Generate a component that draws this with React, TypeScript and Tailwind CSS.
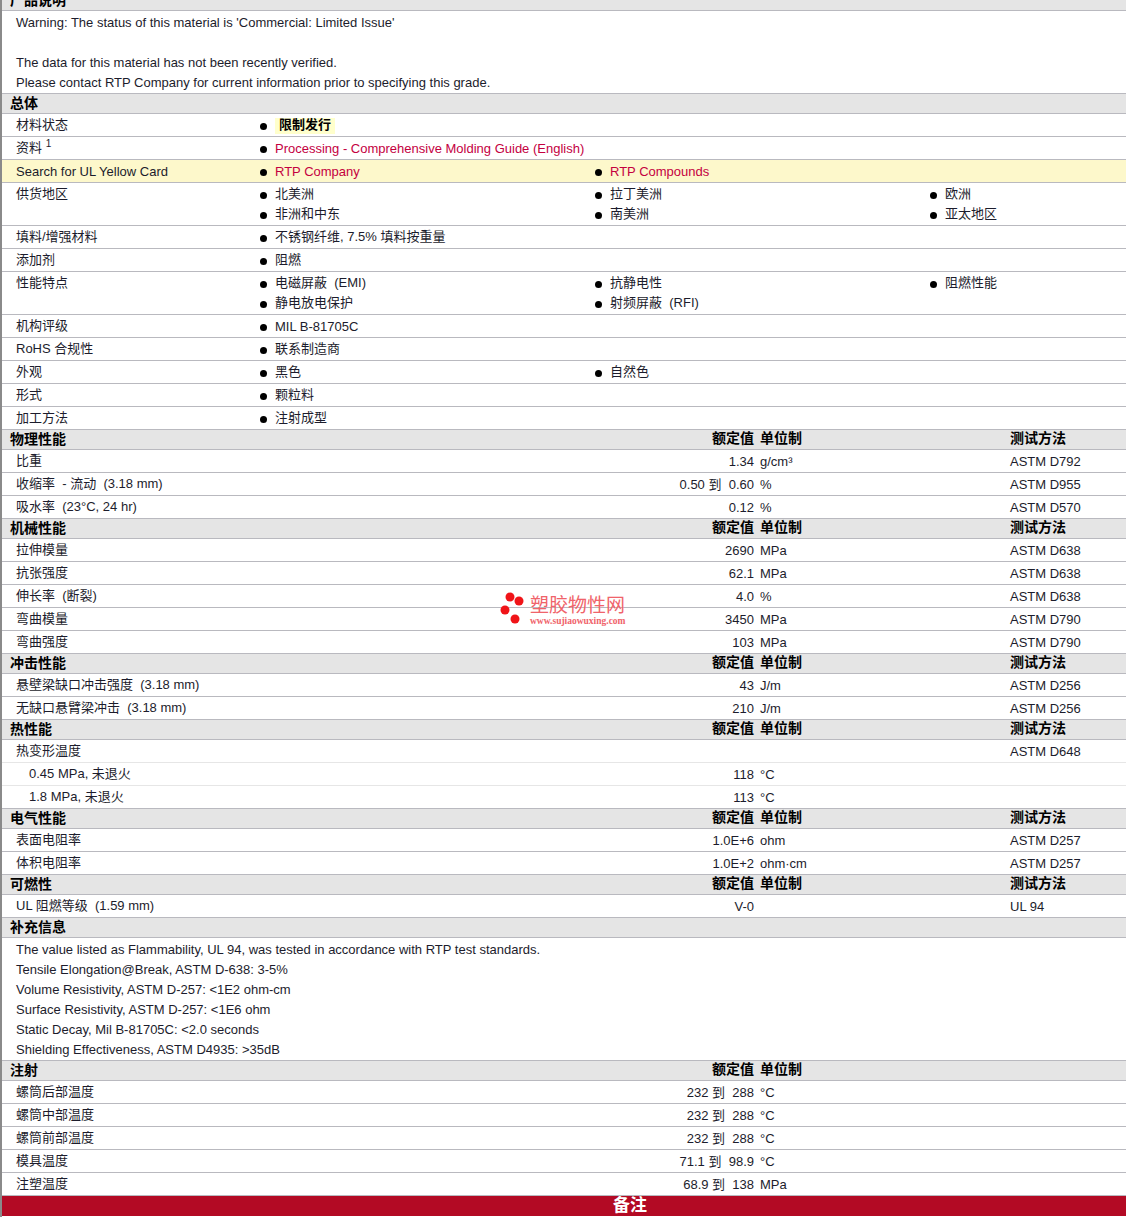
const FONT = "font-['Liberation_Sans','Noto_Sans_CJK_SC',sans-serif]"

type Item = { text: string; link?: boolean }

// Noto CJK glyphs sit a pixel lower than the Latin ones here
const nudge = (text: string) => (/[\u4e00-\u9fff]/.test(text) ? 'mt-[-2px]' : '')

function Section({ title, cols, method, className = '' }: { title: string; cols?: boolean; method?: boolean; className?: string }) {
  return (
    <div className={`flex h-[20px] items-center border-b border-[#b9b9bf] bg-[#e5e5e5] pb-[2px] pl-[8px] text-[14px] font-bold leading-[17px] text-black ${className}`}>
      <div className="mt-[2px] flex-1">{title}</div>
      {cols && <div className="w-[100px] pr-[1px] text-right">额定值</div>}
      {cols && <div className="ml-[5px] w-[250px]">单位制</div>}
      <div className="w-[116px]">{method ? '测试方法' : ''}</div>
    </div>
  )
}

function Bullet({ item }: { item: Item }) {
  return (
    <div className="flex h-[20px] items-center whitespace-pre">
      <span className="h-[7px] w-[7px] rounded-full bg-black" />
      <span className={`ml-[8px] ${nudge(item.text)} ${item.link ? 'text-[#c4003f]' : ''}`}>{item.text}</span>
    </div>
  )
}

function InfoRow({ label, items, yellow, latin }: { label: React.ReactNode; items: (string | Item)[]; yellow?: boolean; latin?: boolean }) {
  return (
    <div className={`flex border-b border-[#b9b9bf] pt-[2px] pl-[14px] ${yellow ? 'bg-[#fdf8cb]' : ''}`}>
      <div className={`h-[20px] w-[244px] ${latin ? 'leading-[20px]' : 'leading-[18px]'}`}>{label}</div>
      <div className="grid flex-1 grid-cols-[335px_335px_196px]">
        {items.map((it, i) => (
          <Bullet key={i} item={typeof it === 'string' ? { text: it } : it} />
        ))}
      </div>
    </div>
  )
}

function DataRow({ label, value, unit, method, sub, light }: { label: string; value?: string; unit?: string; method?: string; sub?: boolean; light?: boolean }) {
  return (
    <div className={`flex h-[23px] items-center border-b pt-[1px] whitespace-pre ${light ? 'border-[#e6e6e6]' : 'border-[#b9b9bf]'} ${sub ? 'pl-[27px]' : 'pl-[14px]'}`}>
      <div className={`flex-1 ${nudge(label)}`}>{label}</div>
      <div className="pr-[1px] text-right">{value}</div>
      <div className="ml-[5px] w-[250px]">{unit}</div>
      <div className="w-[116px]">{method}</div>
    </div>
  )
}

function TextBlock({ lines, className = '' }: { lines: string[]; className?: string }) {
  return (
    <div className={`border-b border-[#b9b9bf] pl-[14px] leading-[20px] ${className}`}>
      {lines.map((l, i) => (
        <div key={i} className="h-[20px]">{l}</div>
      ))}
    </div>
  )
}

export default function App() {
  return (
    <div className={`relative h-[1217px] w-[1126px] overflow-hidden border-l-2 border-[#8a8a8a] bg-white text-[13px] text-[#1c1c2c] ${FONT}`}>
      <Section title="产品说明" className="mt-[-9px]" />
      <TextBlock
        className="pt-[2px]"
        lines={[
          "Warning: The status of this material is 'Commercial: Limited Issue'",
          '',
          'The data for this material has not been recently verified.',
          'Please contact RTP Company for current information prior to specifying this grade.',
        ]}
      />
      <Section title="总体" />
      <div className="flex border-b border-[#b9b9bf] pt-[2px] pl-[14px]">
        <div className="h-[20px] w-[244px] leading-[18px]">材料状态</div>
        <div className="flex h-[20px] items-center">
          <span className="h-[7px] w-[7px] rounded-full bg-black" />
          <span className="ml-[8px] h-[16px] bg-[#ffffcc] px-[4px] leading-[14px] font-bold text-black">限制发行</span>
        </div>
      </div>
      <InfoRow
        label={<>资料 <sup className="text-[10px]">1</sup></>}
        items={[{ text: 'Processing - Comprehensive Molding Guide (English)', link: true }]}
      />
      <InfoRow latin yellow label="Search for UL Yellow Card" items={[{ text: 'RTP Company', link: true }, { text: 'RTP Compounds', link: true }]} />
      <InfoRow label="供货地区" items={['北美洲', '拉丁美洲', '欧洲', '非洲和中东', '南美洲', '亚太地区']} />
      <InfoRow label="填料/增强材料" items={['不锈钢纤维, 7.5% 填料按重量']} />
      <InfoRow label="添加剂" items={['阻燃']} />
      <InfoRow label="性能特点" items={['电磁屏蔽  (EMI)', '抗静电性', '阻燃性能', '静电放电保护', '射频屏蔽  (RFI)']} />
      <InfoRow label="机构评级" items={['MIL B-81705C']} />
      <InfoRow label="RoHS 合规性" items={['联系制造商']} />
      <InfoRow label="外观" items={['黑色', '自然色']} />
      <InfoRow label="形式" items={['颗粒料']} />
      <InfoRow label="加工方法" items={['注射成型']} />

      <Section title="物理性能" cols method />
      <DataRow label="比重" value="1.34" unit="g/cm³" method="ASTM D792" />
      <DataRow label="收缩率  - 流动  (3.18 mm)" value="0.50 到  0.60" unit="%" method="ASTM D955" />
      <DataRow label="吸水率  (23°C, 24 hr)" value="0.12" unit="%" method="ASTM D570" />

      <Section title="机械性能" cols method />
      <DataRow label="拉伸模量" value="2690" unit="MPa" method="ASTM D638" />
      <DataRow label="抗张强度" value="62.1" unit="MPa" method="ASTM D638" />
      <DataRow label="伸长率  (断裂)" value="4.0" unit="%" method="ASTM D638" />
      <DataRow label="弯曲模量" value="3450" unit="MPa" method="ASTM D790" />
      <DataRow label="弯曲强度" value="103" unit="MPa" method="ASTM D790" />

      <Section title="冲击性能" cols method />
      <DataRow label="悬壁梁缺口冲击强度  (3.18 mm)" value="43" unit="J/m" method="ASTM D256" />
      <DataRow label="无缺口悬臂梁冲击  (3.18 mm)" value="210" unit="J/m" method="ASTM D256" />

      <Section title="热性能" cols method />
      <DataRow light label="热变形温度" method="ASTM D648" />
      <DataRow light sub label="0.45 MPa, 未退火" value="118" unit="°C" />
      <DataRow sub label="1.8 MPa, 未退火" value="113" unit="°C" />

      <Section title="电气性能" cols method />
      <DataRow label="表面电阻率" value="1.0E+6" unit="ohm" method="ASTM D257" />
      <DataRow label="体积电阻率" value="1.0E+2" unit="ohm·cm" method="ASTM D257" />

      <Section title="可燃性" cols method />
      <DataRow label="UL 阻燃等级  (1.59 mm)" value="V-0" method="UL 94" />

      <Section title="补充信息" />
      <TextBlock
        className="pt-[2px]"
        lines={[
          'The value listed as Flammability, UL 94, was tested in accordance with RTP test standards.',
          'Tensile Elongation@Break, ASTM D-638: 3-5%',
          'Volume Resistivity, ASTM D-257: <1E2 ohm-cm',
          'Surface Resistivity, ASTM D-257: <1E6 ohm',
          'Static Decay, Mil B-81705C: <2.0 seconds',
          'Shielding Effectiveness, ASTM D4935: >35dB',
        ]}
      />

      <Section title="注射" cols />
      <DataRow label="螺筒后部温度" value="232 到  288" unit="°C" />
      <DataRow label="螺筒中部温度" value="232 到  288" unit="°C" />
      <DataRow label="螺筒前部温度" value="232 到  288" unit="°C" />
      <DataRow label="模具温度" value="71.1 到  98.9" unit="°C" />
      <DataRow label="注塑温度" value="68.9 到  138" unit="MPa" />

      <div className="flex h-[20px] items-center justify-center bg-[#b30a24] pl-[132px] text-[17px] font-bold text-white">备注</div>

      {/* watermark */}
      <div className="absolute top-[591px] left-[498px] flex items-start gap-[4px]">
        <svg width="26" height="34" viewBox="0 0 26 34">
          <circle cx="10" cy="6" r="4.5" fill="#f01418" />
          <circle cx="19" cy="10" r="4.5" fill="#f01418" />
          <circle cx="5" cy="19" r="4.5" fill="#f01418" />
          <circle cx="15" cy="28" r="4.5" fill="#f01418" />
        </svg>
        <div className="mt-[5px] flex flex-col">
          <span className="text-[19px] leading-[20px] font-normal text-[#f0636a]">塑胶物性网</span>
          <span className="font-['Liberation_Serif',serif] text-[9.5px] leading-[10px] font-bold text-[#f0636a]">www.sujiaowuxing.com</span>
        </div>
      </div>
    </div>
  )
}
